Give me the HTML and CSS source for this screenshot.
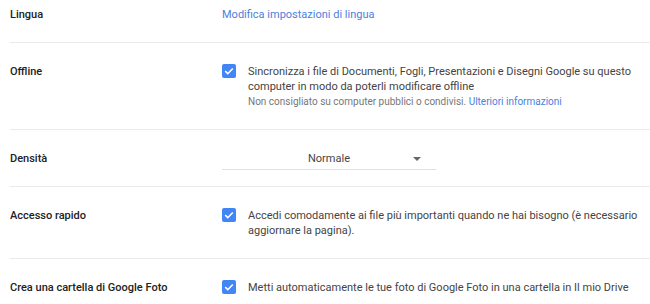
FILE: index.html
```html
<!DOCTYPE html>
<html lang="it">
<head>
    <meta charset="UTF-8">
    <title>Impostazioni</title>
    <link rel="stylesheet" href="styles.css">
</head>
<body>
    <div class="settings">
        <div class="row first">
            <div class="label">Lingua</div>
            <div class="value"><a href="#" class="link">Modifica impostazioni di lingua</a></div>
        </div>
        <div class="row">
            <div class="label">Offline</div>
            <div class="value check-row">
                <span class="checkbox"><svg viewBox="0 0 14 14"><path d="M3.2 7.2l2.6 2.5 5-5.2" /></svg></span>
                <div class="check-text">
                    Sincronizza i file di Documenti, Fogli, Presentazioni e Disegni Google su questo computer in modo da poterli modificare offline
                    <div class="note">Non consigliato su computer pubblici o condivisi. <a href="#" class="link">Ulteriori informazioni</a></div>
                </div>
            </div>
        </div>
        <div class="row">
            <div class="label">Densità</div>
            <div class="value">
                <div class="select">
                    <span>Normale</span>
                    <span class="arrow"></span>
                </div>
            </div>
        </div>
        <div class="row">
            <div class="label">Accesso rapido</div>
            <div class="value check-row">
                <span class="checkbox"><svg viewBox="0 0 14 14"><path d="M3.2 7.2l2.6 2.5 5-5.2" /></svg></span>
                <div class="check-text">Accedi comodamente ai file più importanti quando ne hai bisogno (è necessario aggiornare la pagina).</div>
            </div>
        </div>
        <div class="row">
            <div class="label">Crea una cartella di Google Foto</div>
            <div class="value check-row">
                <span class="checkbox"><svg viewBox="0 0 14 14"><path d="M3.2 7.2l2.6 2.5 5-5.2" /></svg></span>
                <div class="check-text">Metti automaticamente le tue foto di Google Foto in una cartella in Il mio Drive</div>
            </div>
        </div>
    </div>
</body>
</html>
```
FILE: styles.css
```css
body {
    margin: 0;
    font-family: Roboto, Arial, sans-serif;
    font-size: 11px;
    line-height: 15px;
    color: #444;
    background: #fff;
}

.settings {
    margin-left: 10px;
}

.row {
    display: flex;
    padding: 21px 0 20px;
    border-bottom: 1px solid #ebebeb;
}

.row.first {
    padding-top: 7px;
}

.row:last-child {
    border-bottom: none;
}

.label {
    width: 212px;
    flex-shrink: 0;
    font-weight: 500;
    color: #222;
}

.value {
    flex: 1;
}

.link {
    color: #4a7fe0;
    text-decoration: none;
}

.check-row {
    display: flex;
    align-items: flex-start;
}

.checkbox {
    width: 14px;
    height: 14px;
    margin-right: 12px;
    flex-shrink: 0;
    background: #4285f4;
    border-radius: 2px;
}

.checkbox svg {
    display: block;
    width: 14px;
    height: 14px;
    fill: none;
    stroke: #fff;
    stroke-width: 1.6;
}

.check-text {
    padding-right: 4px;
}

.note {
    font-size: 10px;
    color: #777;
}

.select {
    position: relative;
    width: 214px;
    text-align: center;
    border-bottom: 1px solid #e0e0e0;
    padding-bottom: 3px;
    margin-bottom: -4px;
    color: #444;
}

.arrow {
    position: absolute;
    right: 15px;
    top: 6px;
    border-left: 4px solid transparent;
    border-right: 4px solid transparent;
    border-top: 4px solid #666;
}
```
